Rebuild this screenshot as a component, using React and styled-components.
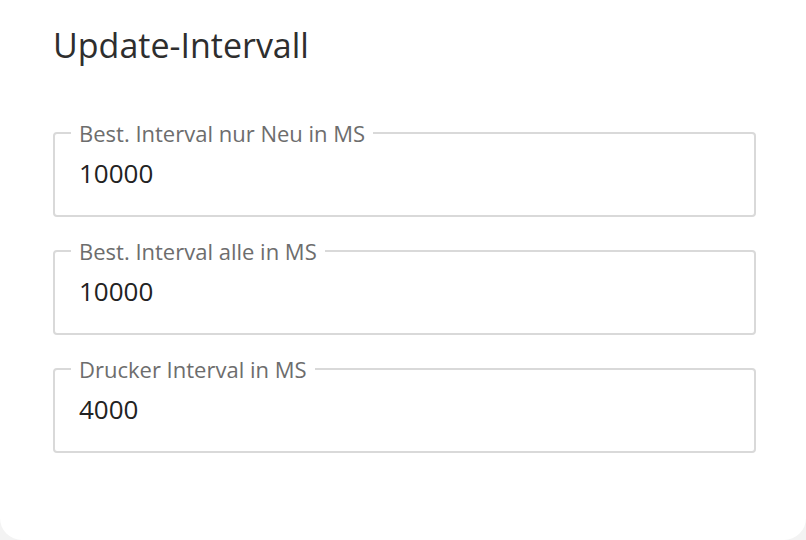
import React from 'react'
import styled, { createGlobalStyle } from "styled-components";

const GlobalStyle = createGlobalStyle`
    body {
        margin: 0;
        background: #f3f3f3;
        font-family: 'Open Sans', 'Noto Sans', sans-serif;
    }
`;

const fields = [
    { label: "Best. Interval nur Neu in MS", value: "10000" },
    { label: "Best. Interval alle in MS", value: "10000" },
    { label: "Drucker Interval in MS", value: "4000" },
];

export default function App() {
  return (
    <>
      <GlobalStyle />
      <Card>
        <Title>Update-Intervall</Title>
        <Fields>
          {fields.map((f) => (
            <Field key={f.label}>
              <legend>{f.label}</legend>
              <input type="text" defaultValue={f.value} />
            </Field>
          ))}
        </Fields>
      </Card>
    </>
  )
}

const Card = styled.div`
    box-sizing: border-box;
    width: 806px;
    height: 540px;
    background: #FFFFFF;
    border-radius: 0 0 22px 22px;
    padding: 23px 50px 0 53px;
`;

const Title = styled.h2`
    margin: 0;
    font-family: 'Open Sans', 'Noto Sans', sans-serif;
    font-weight: 400;
    font-size: 34px;
    line-height: 44px;
    color: #2e2e2e;
`;

const Fields = styled.div`
    display: flex;
    flex-direction: column;
    gap: 23px;
    margin-top: 55px;
`;

const Field = styled.fieldset`
    box-sizing: border-box;
    margin: 0;
    padding: 0 24px 27px;
    border: 2px solid #d9d9d9;
    border-radius: 4px;
    min-width: 0;
    legend {
        margin-left: -8px;
        padding: 0 8px;
        font-size: 22px;
        line-height: 22px;
        color: #6d6d6d;
    }
    input {
        display: block;
        width: 100%;
        border: none;
        outline: none;
        padding: 0;
        margin-top: 14px;
        font-family: 'Open Sans', 'Noto Sans', sans-serif;
        font-size: 26px;
        line-height: 30px;
        color: #222222;
        background: transparent;
    }
`;
